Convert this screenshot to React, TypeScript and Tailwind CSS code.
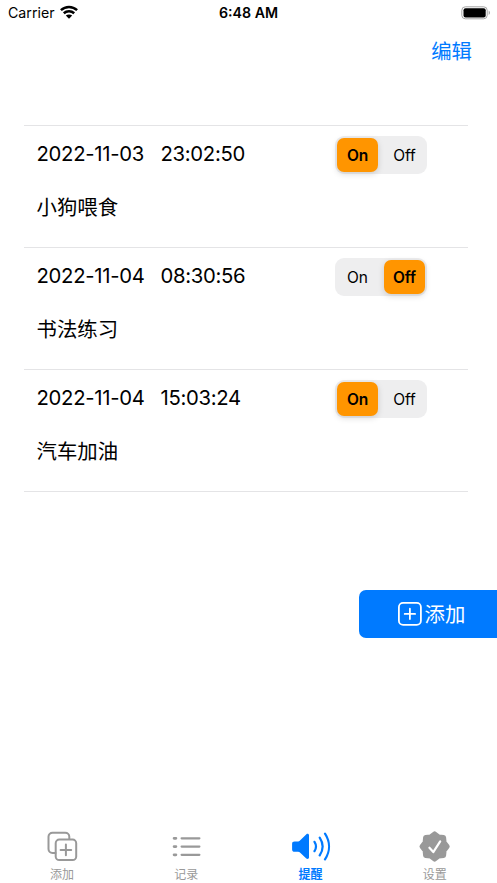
import { useState } from 'react';
import type { ReactNode } from 'react';

type Reminder = { date: string; time: string; title: string; on: boolean };

const INITIAL: Reminder[] = [
  { date: '2022-11-03', time: '23:02:50', title: '小狗喂食', on: true },
  { date: '2022-11-04', time: '08:30:56', title: '书法练习', on: false },
  { date: '2022-11-04', time: '15:03:24', title: '汽车加油', on: true },
];

export default function App() {
  const [reminders, setReminders] = useState(INITIAL);
  const [tab, setTab] = useState('提醒');

  function setOn(index: number, on: boolean) {
    setReminders(list => list.map((r, i) => (i === index ? { ...r, on } : r)));
  }

  return (
    <div className="flex h-[883px] w-[497px] flex-col overflow-hidden bg-white font-['Inter','Noto_Sans_CJK_SC',sans-serif] text-black">
      <StatusBar />

      <div className="flex h-[50px] justify-end pr-[25px]">
        <button className="h-[50px] pt-px text-[20.4px] leading-[50px] text-[#007aff]">编辑</button>
      </div>

      <ul className="mt-[49px] mr-[29px] ml-6 border-t border-[#e4e4e6]">
        {reminders.map((r, i) => (
          <li key={i} className="flex h-[122px] justify-between border-b border-[#e4e4e6] pr-[41px] pl-[12.5px]">
            <div>
              <div className="mt-[13px] flex h-[30px] text-[20.3px] leading-[30px] tracking-[-0.3px]">
                <span className="w-[124px]">{r.date}</span>
                <span>{r.time}</span>
              </div>
              <div className="mt-6 text-[20.4px] leading-[30px]">{r.title}</div>
            </div>
            <Segmented on={r.on} onChange={on => setOn(i, on)} />
          </li>
        ))}
      </ul>

      <button className="mt-[98px] flex h-12 w-[138px] items-center self-end rounded-l-[7px] bg-[#007aff] pl-[37.5px] text-white">
        <svg width="26" height="26" viewBox="0 0 26 26" fill="none" stroke="currentColor" strokeWidth="1.8" strokeLinecap="round">
          <rect x="1.9" y="1.9" width="22" height="22" rx="4.2" />
          <path d="M12.9 7.7v10.4M7.7 12.9h10.4" />
        </svg>
        <span className="ml-[2px] pt-[2px] text-[20.4px] leading-[46px]">添加</span>
      </button>

      <nav className="mt-auto grid h-[58px] grid-cols-4">
        <Tab label="添加" active={tab === '添加'} onClick={() => setTab('添加')}>
          <svg width="40" height="34" viewBox="0 0 40 34" fill="none" stroke="currentColor" strokeWidth="2" strokeLinecap="round">
            <path d="M13.5 24h-3a4 4 0 0 1-4-4V7.7a4 4 0 0 1 4-4H23.3a4 4 0 0 1 4 4V10" />
            <rect x="13.7" y="10.6" width="20.5" height="20.5" rx="3.6" />
            <path d="M23.9 15.6v10.6M18.6 20.9h10.6" />
          </svg>
        </Tab>
        <Tab label="记录" active={tab === '记录'} onClick={() => setTab('记录')}>
          <svg width="40" height="34" viewBox="0 0 40 34" fill="none" stroke="currentColor" strokeWidth="2.2" strokeLinecap="round">
            <path d="M8.1 9.3h1.8M8.1 17.6h1.8M8.1 25.8h1.8" strokeWidth="2.8" />
            <path d="M15.6 9.3h17.8M15.6 17.6h17.8M15.6 25.8h17.8" />
          </svg>
        </Tab>
        <Tab label="提醒" active={tab === '提醒'} onClick={() => setTab('提醒')}>
          <svg width="40" height="34" viewBox="0 0 40 34" fill="none" stroke="currentColor" strokeWidth="2.2" strokeLinecap="round">
            <path
              d="M3.6 12.4h3.6c.6 0 1-.2 1.5-.6l6.7-6.5c1-.9 2.6-.4 2.6 1v22.2c0 1.4-1.6 1.9-2.7 1l-6.6-6.2c-.5-.4-.9-.6-1.5-.6H3.6c-1.6 0-2.5-.8-2.5-2.3v-5.6c0-1.6.9-2.4 2.5-2.4Z"
              fill="currentColor"
              stroke="none"
            />
            <path d="M23.5 12.8c1.9 3 1.9 6.4 0 9.4M28.7 8.6c3.7 5.6 3.7 12.2 0 17.8M34 4.6c5.3 8.1 5.3 17.7 0 25.8" />
          </svg>
        </Tab>
        <Tab label="设置" active={tab === '设置'} onClick={() => setTab('设置')}>
          <svg width="40" height="34" viewBox="0 0 40 34" fill="none">
            <g transform="translate(19.6 17.5)" fill="currentColor" stroke="currentColor" strokeWidth="5" strokeLinejoin="round">
              <path d="M0-12.6 4-9.5 9-9 9.5-4 12.6 0 9.5 4 9 9 4 9.5 0 12.6-4 9.5-9 9-9.5 4-12.6 0-9.5-4-9-9-4-9.5Z" />
            </g>
            <path d="m14.4 18.7 3.9 4.4 6.9-10.7" stroke="white" strokeWidth="2.2" strokeLinecap="round" strokeLinejoin="round" />
          </svg>
        </Tab>
      </nav>
    </div>
  );
}

function StatusBar() {
  return (
    <header className="grid h-[26px] grid-cols-3 items-center px-2 text-[14.2px] leading-[26px]">
      <div className="flex items-center gap-[5px]">
        <span>Carrier</span>
        <svg className="-mt-[2px]" width="18" height="14" viewBox="0 0 18 14" fill="none" stroke="currentColor" strokeWidth="2.5">
          <path d="M.9 5.1c4.7-4.3 11.5-4.3 16.2 0M3.8 8.2c3-2.7 7.4-2.7 10.4 0" />
          <path d="M9 13.7 5.8 10.5c1.8-1.5 4.6-1.5 6.4 0Z" fill="currentColor" stroke="none" />
        </svg>
      </div>
      <span className="text-center font-semibold">6:48 AM</span>
      <svg className="-mt-px -mr-[3px] justify-self-end" width="31" height="14" viewBox="0 0 31 14">
        <rect x=".8" y=".8" width="25.4" height="12" rx="3.5" fill="none" stroke="#a5a5a5" />
        <rect x="2.5" y="2.2" width="22.2" height="9.3" rx="2" />
        <path d="M27.7 4.6c1.7.8 1.7 3.6 0 4.4Z" fill="#a5a5a5" />
      </svg>
    </header>
  );
}

function Segmented({ on, onChange }: { on: boolean; onChange: (on: boolean) => void }) {
  const base = 'h-[34px] w-[41px] rounded-[7px] pt-px text-[15.5px] leading-[33px] tracking-[-0.1px]';
  const selected = 'bg-[#ff9500] font-semibold shadow-[0_2px_6px_rgba(0,0,0,0.15)]';
  return (
    <div className="mt-2.5 flex h-[38px] w-[92px] justify-between rounded-[9px] bg-[#eeeeef] p-[2px]">
      <button onClick={() => onChange(true)} className={`${base} ${on ? selected : ''}`}>On</button>
      <button onClick={() => onChange(false)} className={`${base} ${on ? '' : selected}`}>Off</button>
    </div>
  );
}

function Tab({ label, active, onClick, children }: { label: string; active: boolean; onClick: () => void; children: ReactNode }) {
  return (
    <button onClick={onClick} className={`flex flex-col items-center pt-1 ${active ? 'font-bold text-[#007aff]' : 'text-[#999999]'}`}>
      {children}
      <span className="mt-[3px] text-[12px] leading-[18px]">{label}</span>
    </button>
  );
}
